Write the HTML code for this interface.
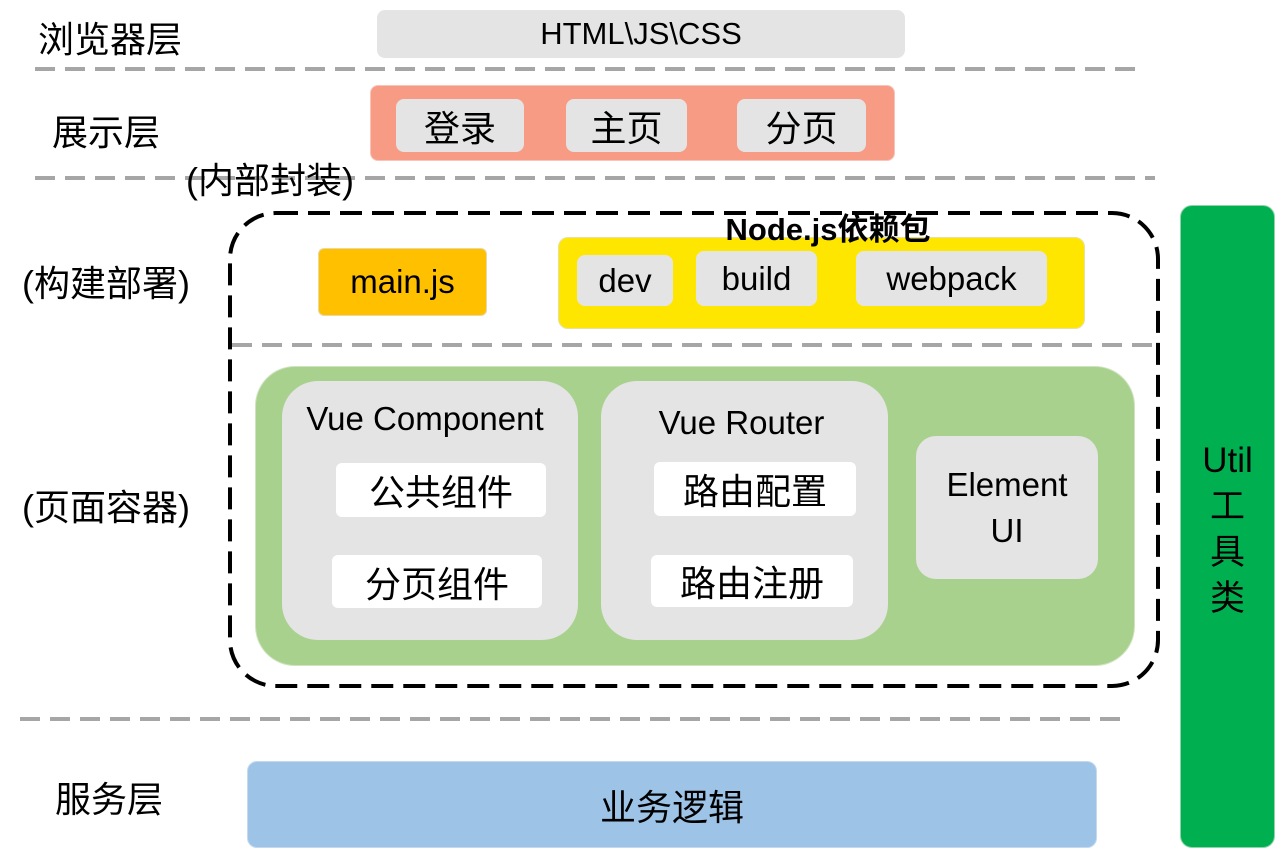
<!DOCTYPE html>
<html><head><meta charset="utf-8"><style>
html,body{margin:0;padding:0;background:#fff;}
body{width:1277px;height:850px;position:relative;overflow:hidden;font-family:"Liberation Sans","Noto Sans CJK SC",sans-serif;color:#000;}
.a{position:absolute;}
.lbl{position:absolute;font-size:36px;line-height:1;white-space:nowrap;}
.box{position:absolute;display:flex;align-items:center;justify-content:center;box-sizing:border-box;white-space:nowrap;}
.g{background:#e4e4e4;border-radius:8px;}
.w{background:#fff;border-radius:6px;font-size:36px;}
.dash{position:absolute;height:4px;background:repeating-linear-gradient(90deg,#a6a6a6 0 20px,transparent 20px 30px);}
</style></head><body>
<div class="lbl" style="left:38px;top:22px;">浏览器层</div>
<div class="box g" style="left:377px;top:10px;width:528px;height:48px;font-size:31px;">HTML\JS\CSS</div>
<div class="dash" style="left:35px;top:67px;width:1100px;"></div>

<div class="lbl" style="left:52px;top:115px;">展示层</div>
<div class="a" style="left:370px;top:85px;width:525px;height:76px;background:#f89b85;border:1px solid #f8c4b8;border-radius:8px;box-sizing:border-box;"></div>
<div class="box g" style="left:396px;top:99px;width:128px;height:53px;font-size:36px;">登录</div>
<div class="box g" style="left:566px;top:99px;width:121px;height:53px;font-size:36px;">主页</div>
<div class="box g" style="left:737px;top:99px;width:129px;height:53px;font-size:36px;">分页</div>
<div class="dash" style="left:35px;top:176px;width:1120px;"></div>
<div class="lbl" style="left:186px;top:163px;">(内部封装)</div>

<svg class="a" style="left:228px;top:211px;" width="932" height="477"><rect x="2" y="2" width="928" height="473" rx="46" ry="46" fill="none" stroke="#000" stroke-width="4" stroke-dasharray="22 10"/></svg>
<div class="dash" style="left:232px;top:343px;width:924px;"></div>

<div class="lbl" style="left:22px;top:266px;">(构建部署)</div>
<div class="box" style="left:318px;top:248px;width:169px;height:68px;background:#ffc000;border:1px solid #e8d8a8;border-radius:6px;font-size:33px;">main.js</div>
<div class="a" style="left:558px;top:237px;width:527px;height:92px;background:#ffe600;border:1px solid #e8e0a0;border-radius:10px;box-sizing:border-box;"></div>
<div class="a" style="left:558px;top:213px;width:540px;text-align:center;font-size:31px;font-weight:bold;line-height:34px;">Node.js依赖包</div>
<div class="box g" style="left:577px;top:255px;width:96px;height:51px;font-size:33px;">dev</div>
<div class="box g" style="left:696px;top:251px;width:121px;height:55px;font-size:33px;">build</div>
<div class="box g" style="left:856px;top:251px;width:191px;height:55px;font-size:33px;">webpack</div>

<div class="lbl" style="left:22px;top:490px;">(页面容器)</div>
<div class="a" style="left:255px;top:366px;width:880px;height:300px;background:#a9d18e;border:1px solid #cfe3bf;border-radius:40px;box-sizing:border-box;"></div>
<div class="a" style="left:282px;top:381px;width:296px;height:259px;background:#e4e4e4;border-radius:36px;"></div>
<div class="a" style="left:277px;top:400px;width:296px;text-align:center;font-size:33px;line-height:38px;">Vue Component</div>
<div class="box w" style="left:336px;top:463px;width:210px;height:54px;">公共组件</div>
<div class="box w" style="left:332px;top:555px;width:210px;height:53px;">分页组件</div>
<div class="a" style="left:601px;top:381px;width:287px;height:259px;background:#e4e4e4;border-radius:36px;"></div>
<div class="a" style="left:598px;top:404px;width:287px;text-align:center;font-size:33px;line-height:38px;">Vue Router</div>
<div class="box w" style="left:654px;top:462px;width:202px;height:54px;">路由配置</div>
<div class="box w" style="left:651px;top:555px;width:202px;height:52px;">路由注册</div>
<div class="box" style="left:916px;top:436px;width:182px;height:143px;background:#e4e4e4;border-radius:20px;font-size:33px;text-align:center;line-height:46px;white-space:normal;">Element<br>UI</div>

<div class="dash" style="left:20px;top:717px;width:1105px;"></div>
<div class="lbl" style="left:55px;top:782px;">服务层</div>
<div class="box" style="left:247px;top:761px;width:850px;height:87px;background:#9dc3e6;border:1px solid #c4d9ee;border-radius:10px;font-size:36px;">业务逻辑</div>

<div class="a" style="left:1180px;top:205px;width:95px;height:643px;background:#00b050;border:1px solid #8fd3a8;border-radius:12px;box-sizing:border-box;"></div>
<div class="a" style="left:1180px;top:438px;width:95px;text-align:center;font-size:35px;line-height:46px;">Util<br>工<br>具<br>类</div>
</body></html>
